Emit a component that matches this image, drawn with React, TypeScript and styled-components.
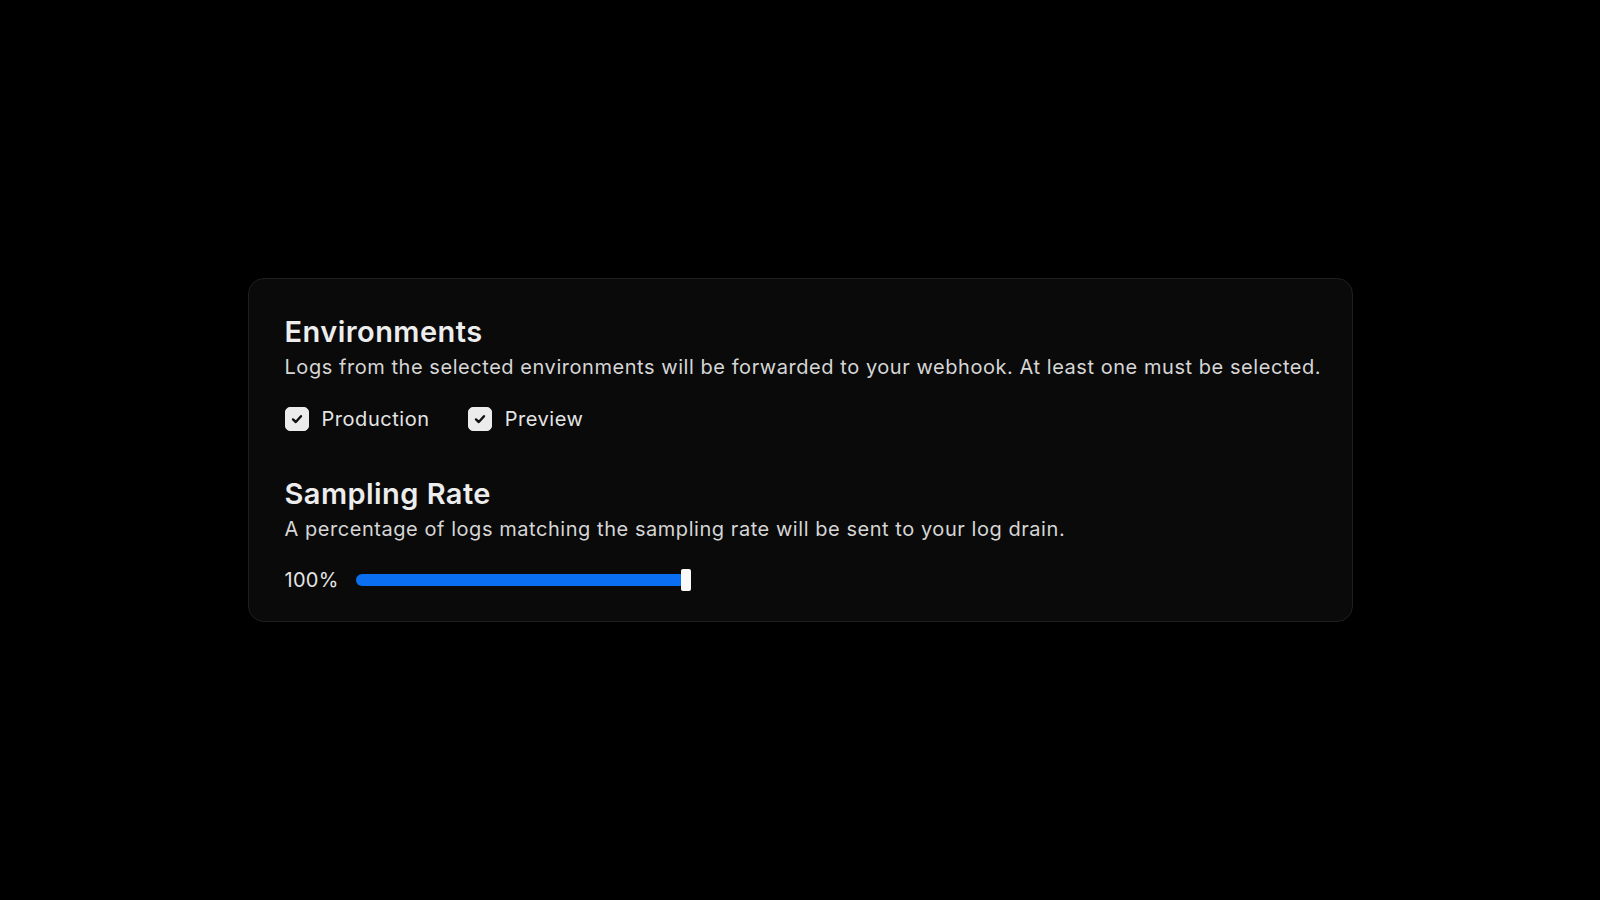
import React, { useState } from 'react';
import styled, { createGlobalStyle } from 'styled-components';

const GlobalStyle = createGlobalStyle`
	html, body {
		margin: 0;
		padding: 0;
		background: #000;
	}
	body {
		font-family: Inter, 'Noto Sans', 'Liberation Sans', sans-serif;
		-webkit-font-smoothing: antialiased;
	}
`;

type Env = { id: string; label: string; checked: boolean };

const App: React.FC = () => {
	const [envs, setEnvs] = useState<Env[]>([
		{ id: 'production', label: 'Production', checked: true },
		{ id: 'preview', label: 'Preview', checked: true }
	]);
	const [rate] = useState(100);

	const toggle = (id: string) =>
		setEnvs(prev => prev.map(e => (e.id === id ? { ...e, checked: !e.checked } : e)));

	return (
		<Page>
			<GlobalStyle />
			<Card>
				<Section>
					<Title>Environments</Title>
					<Description>
						Logs from the selected environments will be forwarded to your webhook. At least one
						must be selected.
					</Description>
					<CheckRow>
						{envs.map(env => (
							<CheckItem key={env.id} onClick={() => toggle(env.id)}>
								<Box $checked={env.checked}>
									{env.checked && (
										<svg width="16" height="16" viewBox="0 0 16 16" fill="none">
											<polyline
												points="4 8.4 6.8 11 12 5.2"
												stroke="#111"
												strokeWidth="2.4"
												strokeLinecap="round"
												strokeLinejoin="round"
											/>
										</svg>
									)}
								</Box>
								<Label>{env.label}</Label>
							</CheckItem>
						))}
					</CheckRow>
				</Section>
				<Section>
					<Title>Sampling Rate</Title>
					<Description>
						A percentage of logs matching the sampling rate will be sent to your log drain.
					</Description>
					<SliderRow>
						<Value>{rate}%</Value>
						<Track>
							<Fill style={{ width: `calc(${rate}% - 10px)` }} />
							<Thumb style={{ left: `calc(${rate}% - 10px)` }} />
						</Track>
					</SliderRow>
				</Section>
			</Card>
		</Page>
	);
};

const Page = styled.div`
	min-height: 100vh;
	display: flex;
	align-items: center;
	justify-content: center;
`;

const Card = styled.div`
	box-sizing: border-box;
	width: 1105px;
	padding: 35px 28px 30px 36px;
	background: #0a0a0a;
	border: 1px solid #1f1f1f;
	border-radius: 16px;
	display: flex;
	flex-direction: column;
	gap: 45px;
	color: #ededed;
`;

const Section = styled.div`
	display: flex;
	flex-direction: column;
`;

const Title = styled.h2`
	margin: 0 0 3px;
	font-size: 29px;
	line-height: 36px;
	font-weight: 600;
	letter-spacing: 0.45px;
	color: #ededed;
`;

const Description = styled.p`
	margin: 0;
	font-size: 20px;
	line-height: 28px;
	font-weight: 400;
	letter-spacing: 0.55px;
	white-space: nowrap;
	color: #d6d6d6;
`;

const CheckRow = styled.div`
	display: flex;
	align-items: center;
	gap: 38px;
	margin-top: 26px;
`;

const CheckItem = styled.label`
	display: flex;
	align-items: center;
	gap: 13px;
	cursor: pointer;
`;

const Box = styled.span<{ $checked: boolean }>`
	box-sizing: border-box;
	width: 24px;
	height: 24px;
	border-radius: 5px;
	display: flex;
	align-items: center;
	justify-content: center;
	background: ${({ $checked }) => ($checked ? '#ececec' : 'transparent')};
	border: 1px solid ${({ $checked }) => ($checked ? '#ececec' : '#555')};
`;

const Label = styled.span`
	font-size: 20px;
	line-height: 24px;
	letter-spacing: 0.55px;
	color: #e4e4e4;
`;

const SliderRow = styled.div`
	display: flex;
	align-items: center;
	gap: 18px;
	margin-top: 26px;
	height: 22px;
`;

const Value = styled.span`
	font-size: 20px;
	line-height: 22px;
	letter-spacing: 0.3px;
	color: #e4e4e4;
	width: 53px;
`;

const Track = styled.div`
	position: relative;
	width: 335px;
	height: 22px;
	display: flex;
	align-items: center;
`;

const Fill = styled.div`
	height: 12px;
	border-radius: 6px 0 0 6px;
	background: #0a6ff0;
`;

const Thumb = styled.div`
	position: absolute;
	top: 0;
	width: 10px;
	height: 22px;
	border-radius: 2px;
	background: #fafafa;
`;

export default App;
